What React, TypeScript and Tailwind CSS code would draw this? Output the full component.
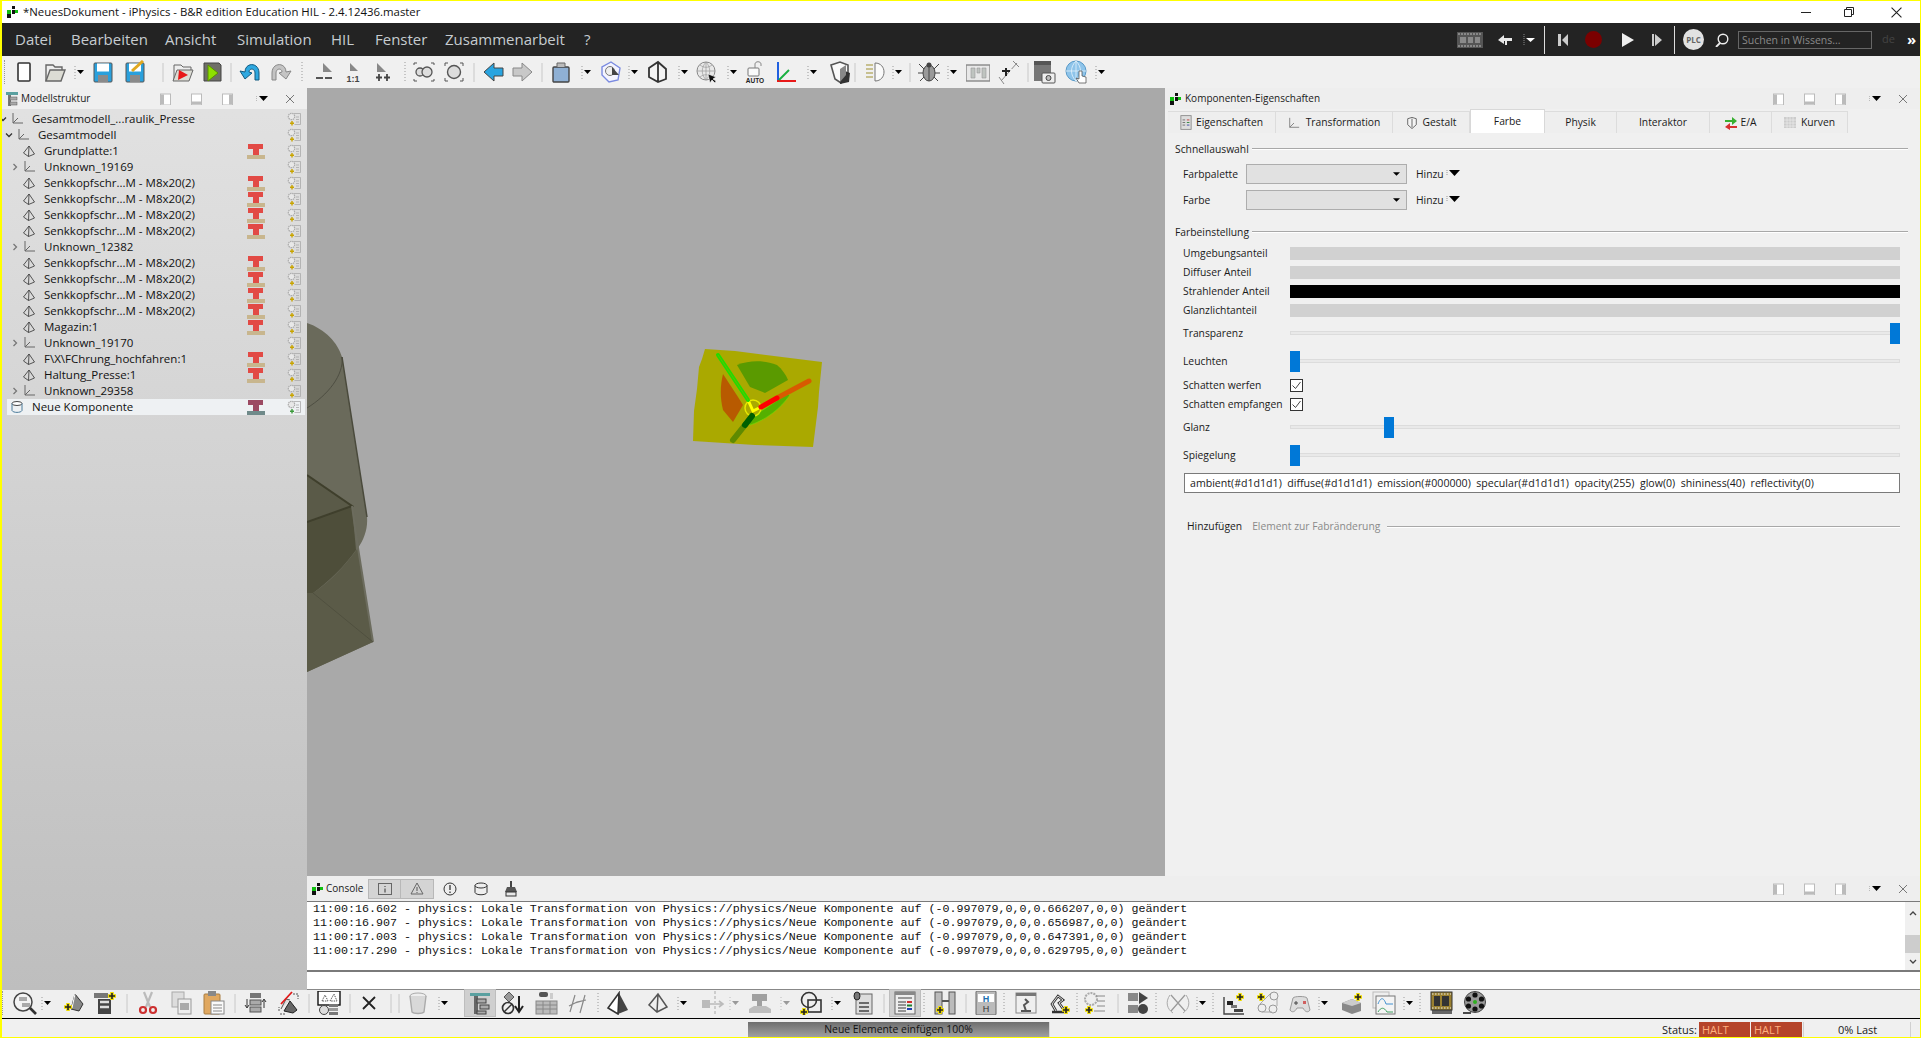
import React from "react";

const S = ({ children, className = "w-6 h-6" }: { children: React.ReactNode; className?: string }) => (
  <svg viewBox="0 0 24 24" className={className + " shrink-0"} fill="none">
    {children}
  </svg>
);

const plus = (x: number, y: number) => (
  <path d={`M${x - 4} ${y}h8M${x} ${y - 4}v8`} stroke="#f0dc00" strokeWidth="3.6" />
);
const plusDark = (x: number, y: number) => (
  <>
    {plus(x, y)}
    <path d={`M${x - 3} ${y}h6M${x} ${y - 3}v6`} stroke="#222" strokeWidth="1.6" />
  </>
);
const miniT = (
  <>
    <path d="M4 3h15v7h-5v6H9v-6H4z" fill="#a0a0a0" />
    <path d="M1 18l5-3h12l5 3v4H1z" fill="#bdbdbd" />
  </>
);
const pyramid = (fill = "none") => <path d="M12 3L3 14l8 7 10-5z M12 3l-1 18" fill={fill} stroke="#555" strokeWidth="1.5" />;

const icons: Record<string, React.ReactNode> = {
  sep: <path d="M12 3v19" stroke="#c8c8c8" />,
  handle: <path d="M12 2v21" stroke="#9a9a9a" strokeDasharray="1 2" />,
  arrow: (
    <>
      <path d="M7 6v13" stroke="#999" strokeDasharray="1 2" />
      <path d="M9 10h7l-3.500 4z" fill="#000" />
    </>
  ),
  arrowG: (
    <>
      <path d="M7 6v13" stroke="#bbb" strokeDasharray="1 2" />
      <path d="M9 10h7l-3.500 4z" fill="#999" />
    </>
  ),
  new: <rect x="6" y="3" width="12" height="18" rx="1" fill="#fff" stroke="#333" strokeWidth="1.6" />,
  open: (
    <>
      <path d="M3 21V5h7l2 2h7v3" fill="#eee" stroke="#666" strokeWidth="1.4" />
      <path d="M3 21l4-11h15l-4 11z" fill="#dcdcd4" stroke="#666" strokeWidth="1.4" />
    </>
  ),
  save: (
    <>
      <rect x="3" y="3" width="18" height="19" rx="1" fill="#2aa0dc" stroke="#555" />
      <rect x="6" y="3.500" width="12" height="8" fill="#fff" />
      <rect x="7" y="15" width="10" height="7" fill="#8a8a8a" />
    </>
  ),
  saveas: (
    <>
      <rect x="3" y="3" width="18" height="19" rx="1" fill="#2aa0dc" stroke="#555" />
      <rect x="6" y="3.500" width="12" height="8" fill="#fff" />
      <rect x="7" y="15" width="10" height="7" fill="#8a8a8a" />
      <path d="M9 11L20 1" stroke="#e0a820" strokeWidth="3" />
    </>
  ),
  openRed: (
    <>
      <path d="M3 20V5h7l2 2h8v3" fill="#eee" stroke="#666" />
      <path d="M2 21l4-11h16l-4 11z" fill="#dcdcd4" stroke="#666" />
      <path d="M8 10l9 5-10 5z" fill="#e81818" />
    </>
  ),
  playGreen: (
    <>
      <path d="M4 3h15l2 2v16H4z" fill="#6f6f68" stroke="#444" />
      <path d="M8 5l10 8-10 8z" fill="#8ee000" stroke="#5a9000" />
    </>
  ),
  undo: <path d="M7 12c0-10 14-10 14 1v7h-4v-7c0-5-6-5-6-1l3 1-7 6-5-8z" fill="#2ea8e0" stroke="#135a80" />,
  redo: <path d="M17 12c0-10-14-10-14 1v7h4v-7c0-5 6-5 6-1l-3 1 7 6 5-8z" fill="#c4c4c4" stroke="#888" />,
  slow: (
    <>
      <path d="M11 3l9 9H11z" fill="#888" />
      <path d="M4 18h7M13 18h7" stroke="#555" strokeWidth="2.2" />
    </>
  ),
  one: (
    <>
      <path d="M9 3l8 8H9z" fill="#888" />
      <text x="12" y="22" textAnchor="middle" fontSize="9" fontWeight="700" fontFamily="Liberation Sans" fill="#444">
        1:1
      </text>
    </>
  ),
  fast: (
    <>
      <path d="M6 3l9 9H6z" fill="#888" />
      <path d="M8 14v7M5 17.500h6M16 14v7M13 17.500h6" stroke="#444" strokeWidth="1.8" />
    </>
  ),
  fit1: (
    <>
      <circle cx="8" cy="12" r="4" fill="#ddd" stroke="#555" strokeWidth="1.3" />
      <circle cx="15" cy="12" r="5" fill="#ddd" stroke="#555" strokeWidth="1.3" />
      <path d="M2 5V3h3M19 3h3v2M2 19v2h3M19 21h3v-2" stroke="#555" />
    </>
  ),
  fit2: (
    <>
      <circle cx="12" cy="12" r="6.500" fill="#ddd" stroke="#555" strokeWidth="1.4" />
      <path d="M3 6V3h3M18 3h3v3M3 18v3h3M18 21h3v-3" stroke="#555" />
    </>
  ),
  left: <path d="M2 12l10-9v5h9v8h-9v5z" fill="#28a4e0" stroke="#444" />,
  right: <path d="M22 12L12 3v5H3v8h9v5z" fill="#c8c8c8" stroke="#888" />,
  box: (
    <>
      <rect x="4" y="7" width="16" height="15" rx="1" fill="#8fb0d4" stroke="#444" strokeWidth="1.4" />
      <path d="M8 7V3h8v4" fill="#bbb" stroke="#666" />
    </>
  ),
  hex: (
    <>
      <path d="M12 2l9 6-2 12-9 2-7-7V7z" fill="#f4f4ff" stroke="#7a8ae0" strokeWidth="1.4" />
      <circle cx="11" cy="11" r="4.500" fill="#eee" stroke="#777" />
      <path d="M13 7l7 8h-7z" fill="#444" />
    </>
  ),
  cube: <path d="M3 8l9-6 8 7v10l-8 3-9-5zM12 2v20" stroke="#333" strokeWidth="1.8" fill="#f3f3f3" />,
  globe: (
    <>
      <circle cx="11" cy="11" r="9" fill="#e8e8e8" stroke="#888" />
      <path d="M2 11h18M11 2v18M5 5c4 3 8 3 12 0M5 17c4-3 8-3 12 0M11 2c-5 6-5 12 0 18M11 2c5 6 5 12 0 18" stroke="#999" strokeWidth=".7" />
      <path d="M13 14l2 9 2-3 3 3 1-2-3-2 3-2z" fill="#111" stroke="#fff" strokeWidth=".6" />
    </>
  ),
  auto: (
    <>
      <rect x="4" y="8" width="11" height="8" rx="1" fill="#fafafa" stroke="#777" />
      <path d="M11 8V4c0-3 6-3 6 0v2" stroke="#888" />
      <text x="11" y="23" textAnchor="middle" fontSize="6.500" fontWeight="700" fontFamily="Liberation Sans" fill="#222">
        AUTO
      </text>
    </>
  ),
  axes: (
    <>
      <path d="M4 2v19" stroke="#2060e0" strokeWidth="2" />
      <path d="M3 21h19" stroke="#e81818" strokeWidth="2" />
      <path d="M5 20L15 10" stroke="#18b040" strokeWidth="2" />
    </>
  ),
  shield: (
    <>
      <path d="M3 5l9-3 8 3v12l-7 6-6-4z" fill="#fafafa" stroke="#555" strokeWidth="1.6" />
      <path d="M12 9l10 4-1 9-9 2z" fill="#333" />
      <path d="M12 9l6-4v10l-6 7z" fill="#888" />
    </>
  ),
  lamp: (
    <>
      <path d="M12 3c12 0 12 18 0 18z" fill="#fafafa" stroke="#777" />
      <path d="M3 5h7M3 9h7M3 13h7M3 17h7" stroke="#b9b070" strokeWidth="1.6" />
    </>
  ),
  bug: (
    <>
      <ellipse cx="12" cy="13" rx="6" ry="8" fill="#999" stroke="#444" />
      <path d="M12 5v16M2 4l5 5M22 4l-5 5M1 13h5M23 13h-5M3 21l4-4M21 21l-4-4" stroke="#444" />
      <circle cx="12" cy="5" r="2.500" fill="#444" />
    </>
  ),
  panelG: (
    <>
      <rect x="0" y="5" width="24" height="16" fill="#e8e8e8" stroke="#888" strokeWidth="1.4" />
      <path d="M5 8h4v10H5zM11 8h3v5h-3zM16 8h4v10h-4z" fill="#bfc4c0" stroke="#999" strokeWidth=".6" />
    </>
  ),
  measure: (
    <>
      <path d="M4 21L20 3" stroke="#888" strokeDasharray="14 2" />
      <path d="M2 17l5 7M16 1l6 6" stroke="#888" />
      <path d="M9 8v8M5 11h8" stroke="#222" strokeWidth="2" />
    </>
  ),
  cam: (
    <>
      <rect x="2" y="1" width="17" height="20" fill="#777" />
      <rect x="2" y="1" width="17" height="4" fill="#555" />
      <rect x="10" y="13" width="13" height="10" rx="1" fill="#eee" stroke="#555" />
      <circle cx="16.500" cy="18" r="2.500" fill="#bbb" stroke="#444" />
    </>
  ),
  globeHand: (
    <>
      <circle cx="11" cy="11" r="10" fill="#8ec4ea" stroke="#5a9ac8" />
      <path d="M1 11h20M11 1v20M11 1c-6 6-6 14 0 20M11 1c6 6 6 14 0 20" stroke="#e4f2fb" strokeWidth=".8" />
      <path d="M14 11h3v5l4 1v6h-7l-3-5 3 1z" fill="#fff" stroke="#444" strokeWidth=".7" />
    </>
  ),
  ztree: (
    <>
      <circle cx="10" cy="11" r="9" fill="#f4f4f4" stroke="#444" strokeWidth="1.5" />
      <path d="M17 17l6 6" stroke="#333" strokeWidth="2.6" />
      <rect x="6" y="6" width="8" height="4" fill="#aaa" />
      <rect x="9" y="12" width="8" height="4" fill="#aaa" />
    </>
  ),
  addShape: (
    <>
      <path d="M14 3l8 10-4 7-8-2z" fill="#888" stroke="#333" />
      <path d="M14 3l-3 14" stroke="#fff" />
      {plusDark(7, 16)}
    </>
  ),
  stackAdd: (
    <>
      <rect x="1" y="2" width="14" height="5" fill="#777" />
      <rect x="5" y="8" width="13" height="15" fill="#444" />
      <path d="M7 11h9M7 16h9" stroke="#ddd" strokeWidth="2.6" />
      {plusDark(19, 5)}
    </>
  ),
  scissors: (
    <>
      <path d="M8 1l6 15M16 1l-6 15" stroke="#bbb" strokeWidth="2.2" />
      <circle cx="7" cy="19" r="3" stroke="#cc3030" strokeWidth="2.2" />
      <circle cx="17" cy="19" r="3" stroke="#cc3030" strokeWidth="2.2" />
    </>
  ),
  copy: (
    <>
      <rect x="3" y="1" width="12" height="15" fill="#ddd" stroke="#aaa" />
      <rect x="9" y="8" width="13" height="15" fill="#eee" stroke="#999" />
      <path d="M11 12h9v7h-9z" fill="#aaa" />
    </>
  ),
  paste: (
    <>
      <rect x="2" y="3" width="16" height="20" rx="1" fill="#e0a860" stroke="#a87c40" />
      <rect x="6" y="0" width="8" height="5" fill="#888" />
      <rect x="9" y="10" width="13" height="13" fill="#fafafa" stroke="#888" />
      <path d="M11 14h9M11 17h9M11 20h9" stroke="#888" />
    </>
  ),
  treeArrows: (
    <>
      <rect x="7" y="2" width="11" height="5" fill="#777" />
      <rect x="7" y="9" width="11" height="5" fill="#aaa" stroke="#555" />
      <rect x="7" y="16" width="11" height="5" fill="#aaa" stroke="#555" />
      <path d="M4 8v8M2 14l2 3 2-3M21 17V9M19 11l2-3 2 3" stroke="#333" />
    </>
  ),
  swap: (
    <>
      <path d="M13 10l7 9-4 3-9-2z" fill="#666" stroke="#222" />
      <path d="M4 18L9 8l4 1" fill="#ddd" stroke="#555" />
      <path d="M4 13L15 1" stroke="#e01818" strokeWidth="1.8" />
      <path d="M16 3h5v5M2 20v-4M8 23H2" stroke="#555" strokeDasharray="2 1" />
    </>
  ),
  big: (
    <>
      <rect x="1" y="0" width="22" height="14" fill="#fff" stroke="#111" strokeWidth="1.4" />
      <path d="M5 10l3-6 3 6zM13 10l4-7 3 7z" stroke="#555" strokeDasharray="1.500 1" />
      <circle cx="7" cy="19" r="4.500" fill="#ddd" stroke="#444" />
      <rect x="12" y="13" width="9" height="3" fill="#777" />
      <rect x="12" y="17" width="9" height="3" fill="#999" />
      <rect x="12" y="21" width="9" height="3" fill="#777" />
    </>
  ),
  x: <path d="M6 6l12 12M18 6L6 18" stroke="#222" strokeWidth="1.8" />,
  trash: (
    <>
      <ellipse cx="12" cy="5" rx="8" ry="3" fill="#eee" stroke="#aaa" />
      <path d="M4 5l2 16c2 2 10 2 12 0l2-16" fill="#d8d8d8" stroke="#aaa" strokeWidth="1.4" />
    </>
  ),
  treeActive: (
    <>
      <rect x="2" y="2" width="20" height="3" fill="#5aa0a0" />
      <rect x="6" y="5" width="4" height="18" fill="#666" />
      <rect x="9" y="8" width="9" height="4" fill="#aaa" stroke="#444" />
      <rect x="12" y="14" width="9" height="4" fill="#aaa" stroke="#444" />
      <rect x="9" y="20" width="9" height="3" fill="#aaa" stroke="#444" />
    </>
  ),
  noShape: (
    <>
      <path d="M9 1l5 5-5 5-5-5z" fill="#999" stroke="#555" />
      <circle cx="8" cy="17" r="5.500" stroke="#333" strokeWidth="1.7" />
      <path d="M4 21l8-8" stroke="#333" strokeWidth="1.5" />
      <path d="M19 5v15M15 15l4 6 4-6" stroke="#222" strokeWidth="2" />
    </>
  ),
  table: (
    <>
      <rect x="2" y="10" width="21" height="13" fill="#bbb" stroke="#888" />
      <path d="M2 14h21M2 18h21M9 10v13M16 10v13" stroke="#888" />
      <rect x="5" y="1" width="9" height="5" rx="2" fill="#555" />
      <rect x="16" y="2" width="3" height="6" fill="#ccc" />
    </>
  ),
  lines: <path d="M4 21L9 4M9 12l7-2M14 22l5-18M3 15l8-4 9-2" stroke="#888" strokeWidth="1.2" />,
  pyrF: (
    <>
      <path d="M13 2l9 17-10 4z" fill="#444" />
      <path d="M13 2L2 17l10 6z" fill="#fff" stroke="#333" strokeWidth="1.6" />
    </>
  ),
  pyr: pyramid(),
  move: (
    <>
      <rect x="1" y="9" width="8" height="8" fill="#bbb" />
      <path d="M9 13h12M18 10l4 3-4 3" stroke="#bbb" strokeWidth="1.6" />
      <path d="M14 0v24" stroke="#ccc" strokeWidth="2" strokeDasharray="3 2" />
    </>
  ),
  tGray: miniT,
  circSq: (
    <>
      <circle cx="10" cy="9" r="7.500" stroke="#333" strokeWidth="1.6" />
      <rect x="9" y="9" width="13" height="12" stroke="#333" strokeWidth="1.6" />
      {plusDark(5, 21)}
    </>
  ),
  bugDoc: (
    <>
      <rect x="6" y="3" width="16" height="20" fill="#ddd" stroke="#666" />
      <path d="M9 12h10M9 16h10M9 20h10" stroke="#444" strokeWidth="1.4" />
      <ellipse cx="7" cy="5" rx="3" ry="4" fill="#777" stroke="#222" />
    </>
  ),
  listActive: (
    <>
      <rect x="2" y="1" width="20" height="22" fill="#eee" stroke="#666" />
      <rect x="2" y="1" width="20" height="3" fill="#888" />
      <path d="M5 7h14" stroke="#444" />
      <path d="M5 11h8M5 14h8M5 17h8M5 20h8" stroke="#777" strokeWidth="1.5" />
      <path d="M14 11h5" stroke="#d03030" strokeWidth="2" />
      <path d="M14 14.500h5" stroke="#208030" strokeWidth="2" />
      <path d="M14 18h5" stroke="#2040b0" strokeWidth="2" />
    </>
  ),
  hPlus: (
    <>
      <rect x="3" y="1" width="7" height="22" fill="#bbb" stroke="#555" />
      <rect x="17" y="1" width="6" height="22" fill="#bbb" stroke="#555" />
      <path d="M10 10h7" stroke="#555" strokeWidth="2" />
      {plusDark(8, 19)}
    </>
  ),
  hh: (
    <>
      <rect x="2" y="0" width="20" height="24" rx="1" fill="#bbb" stroke="#666" />
      <rect x="4" y="3" width="16" height="8" fill="#fff" />
      <text x="12" y="10.500" textAnchor="middle" fontSize="9" fontWeight="700" fontFamily="Liberation Sans" fill="#2070b0">
        H
      </text>
      <text x="12" y="21" textAnchor="middle" fontSize="9" fontFamily="Liberation Sans" fill="#333">
        H
      </text>
    </>
  ),
  robotPanel: (
    <>
      <rect x="2" y="2" width="20" height="20" fill="#efefef" stroke="#888" />
      <rect x="2" y="2" width="20" height="3" fill="#777" />
      <path d="M7 20h10M12 20l-2-6 4-3-3-3" stroke="#555" strokeWidth="2" />
    </>
  ),
  robot: (
    <>
      <path d="M5 21h12M9 20l-4-7 6-8 5 4-4 3 5 7" stroke="#333" strokeWidth="2.6" />
      <path d="M9 20l-4-7 6-8 5 4-4 3 5 7" stroke="#ddd" strokeWidth="1" />
      {plusDark(19, 19)}
    </>
  ),
  gearList: (
    <>
      <circle cx="8" cy="8" r="6" fill="#eee" stroke="#aaa" strokeDasharray="2 1" strokeWidth="2" />
      <path d="M13 5h9M14 10h8M14 15h8M11 20h11" stroke="#888" />
      {plusDark(6, 19)}
    </>
  ),
  playList: (
    <>
      <rect x="2" y="2" width="10" height="8" fill="#888" />
      <rect x="2" y="14" width="10" height="8" fill="#888" />
      <path d="M13 1l9 6-9 6z" fill="#444" />
      <circle cx="17" cy="18" r="5" fill="#444" />
    </>
  ),
  cross: (
    <>
      <path d="M4 4c-5 7-3 14 3 18M20 4c5 7 3 14-3 18" stroke="#aaa" />
      <path d="M5 4l14 16M19 4L5 20" stroke="#999" strokeWidth="1.2" />
    </>
  ),
  chartAdd: (
    <>
      <path d="M2 6v17h20" stroke="#444" strokeWidth="1.4" />
      <rect x="5" y="10" width="6" height="4" fill="#222" />
      <rect x="9" y="14" width="6" height="3" fill="#777" />
      <rect x="12" y="18" width="9" height="3" fill="#444" />
      {plusDark(18, 6)}
    </>
  ),
  gearsAdd: (
    <>
      <circle cx="19" cy="5" r="4" stroke="#999" />
      <circle cx="7" cy="17" r="4" stroke="#999" />
      <circle cx="18" cy="18" r="4" stroke="#999" />
      <path d="M16 2L5 13M22 7v8M7 21h10" stroke="#aaa" />
      {plusDark(6, 6)}
    </>
  ),
  pad: (
    <>
      <path d="M2 19l3-12c1-2 13-2 14 0l3 12c-2 3-5 2-7-2H9c-2 4-5 5-7 2z" fill="#ddd" stroke="#999" />
      <path d="M6 12h4M8 10v4" stroke="#444" />
      <rect x="15" y="10" width="3" height="3" fill="#d06060" />
    </>
  ),
  boxAdd: (
    <>
      <path d="M2 12l10-4 9 4v8l-9 3-10-4z" fill="#888" />
      <path d="M2 12l10-4 9 4-9 3z" fill="#ccc" />
      {plusDark(18, 6)}
    </>
  ),
  charts: (
    <>
      <rect x="1" y="1" width="16" height="16" fill="#eee" stroke="#bbb" />
      <rect x="4" y="5" width="19" height="18" fill="#f4f4f4" stroke="#777" />
      <path d="M6 13c3-8 6-6 8 0h7" stroke="#4090d0" />
      <path d="M6 21c3-5 6-5 9 0h6" stroke="#40a060" />
    </>
  ),
  film: (
    <>
      <rect x="2" y="4" width="20" height="19" fill="#666" />
      <rect x="1" y="1" width="21" height="18" fill="#9a8030" stroke="#333" />
      <rect x="4" y="5" width="6" height="10" fill="#333" />
      <rect x="12" y="5" width="7" height="10" fill="#333" />
      <path d="M2 3h19M2 17h19" stroke="#eee" strokeDasharray="1.500 1.500" />
    </>
  ),
  reel: (
    <>
      <circle cx="13" cy="11" r="10.500" fill="#999" stroke="#444" />
      <circle cx="13" cy="4" r="2.600" fill="#111" />
      <circle cx="13" cy="18" r="2.600" fill="#111" />
      <circle cx="6.500" cy="8" r="2.600" fill="#111" />
      <circle cx="19.500" cy="8" r="2.600" fill="#111" />
      <circle cx="6.500" cy="15" r="2.600" fill="#111" />
      <circle cx="19.500" cy="15" r="2.600" fill="#111" />
      <circle cx="13" cy="11" r="2" fill="#30b020" />
      <path d="M1 22h8" stroke="#222" strokeWidth="1.6" />
    </>
  ),
};

const topTools: [string, string][] = [
  ["new", "w-[31px]"], ["open", "w-[25px]"], ["arrow", "w-[23px]"], ["save", "w-[32px]"], ["saveas", "w-[28px]"],
  ["sep", "w-[20px]"], ["openRed", "w-[29px]"], ["playGreen", "w-[19px]"], ["sep", "w-[19px]"], ["undo", "w-[31px]"],
  ["redo", "w-[21px]"], ["handle", "w-[22px]"], ["slow", "w-[29px]"], ["one", "w-[30px]"], ["fast", "w-[22px]"],
  ["handle", "w-[19px]"], ["fit1", "w-[30px]"], ["fit2", "w-[20px]"], ["sep", "w-[20px]"], ["left", "w-[28px]"],
  ["right", "w-[20px]"], ["sep", "w-[19px]"], ["box", "w-[26px]"], ["arrow", "w-[24px]"], ["hex", "w-[23px]"],
  ["arrow", "w-[24px]"], ["cube", "w-[26px]"], ["arrow", "w-[23px]"], ["globe", "w-[26px]"], ["arrow", "w-[23px]"],
  ["auto", "w-[30px]"], ["axes", "w-[27px]"], ["arrow", "w-[27px]"], ["shield", "w-[15px]"], ["sep", "w-[20px]"],
  ["lamp", "w-[23px]"], ["arrow", "w-[12px]"], ["sep", "w-[19px]"], ["bug", "w-[24px]"], ["arrow", "w-[25px]"],
  ["panelG", "w-[31px]"], ["measure", "w-[19px]"], ["sep", "w-[16px]"], ["cam", "w-[33px]"], ["globeHand", "w-[24px]"],
  ["arrow", "w-[24px]"],
];

const bottomTools: [string, string][] = [
  ["ztree", "w-[22px]"], ["arrow", "w-[26px]"], ["addShape", "w-[32px]"], ["stackAdd", "w-[22px]"], ["sep", "w-[21px]"],
  ["scissors", "w-[33px]"], ["copy", "w-[33px]"], ["paste", "w-[21px]"], ["sep", "w-[20px]"], ["treeArrows", "w-[34px]"],
  ["swap", "w-[20px]"], ["sep", "w-[20px]"], ["big", "w-[21px]"], ["sep", "w-[19px]"], ["x", "w-[22px]"],
  ["sep", "w-[8px]"], ["sep", "w-[19px]"], ["trash", "w-[26px]"], ["arrow", "w-[36px]"], ["treeActive*", "w-[32px]"],
  ["noShape", "w-[34px]"], ["table", "w-[32px]"], ["lines", "w-[20px]"], ["handle", "w-[20px]"], ["pyrF", "w-[40px]"],
  ["pyr", "w-[25px]"], ["arrow", "w-[30px]"], ["move", "w-[22px]"], ["arrowG", "w-[25px]"], ["tGray", "w-[26px]"],
  ["arrowG", "w-[25px]"], ["circSq", "w-[26px]"], ["arrow", "w-[25px]"], ["bugDoc", "w-[22px]"], ["sep", "w-[21px]"],
  ["listActive*", "w-[19px]"], ["handle", "w-[20px]"], ["hPlus", "w-[22px]"], ["sep", "w-[20px]"], ["hh", "w-[18px]"],
  ["handle", "w-[22px]"], ["robotPanel", "w-[33px]"], ["robot", "w-[18px]"], ["handle", "w-[18px]"], ["gearList", "w-[23px]"],
  ["sep", "w-[20px]"], ["playList", "w-[18px]"], ["handle", "w-[22px]"], ["cross", "w-[24px]"], ["arrow", "w-[11px]"],
  ["handle", "w-[21px]"], ["chartAdd", "w-[33px]"], ["gearsAdd", "w-[33px]"], ["pad", "w-[24px]"], ["arrow", "w-[28px]"],
  ["boxAdd", "w-[32px]"], ["charts", "w-[25px]"], ["arrow", "w-[11px]"], ["handle", "w-[22px]"], ["film", "w-[32px]"],
  ["reel", "w-[24px]"],
];

const Tool = ({ name, w }: { name: string; w: string }) => {
  const active = name.endsWith("*");
  const key = active ? name.slice(0, -1) : name;
  return (
    <div className={w + " shrink-0 relative h-6"}>
      {active && <div className="absolute -left-1 -top-[2px] w-8 h-7 bg-[#cfcfcf] border border-[#bdbdbd]" />}
      <div className="absolute left-0 top-0">
        <S>{icons[key]}</S>
      </div>
    </div>
  );
};

const AppMark = () => (
  <svg viewBox="0 0 12 12" className="w-3 h-3 shrink-0">
    <rect x="5" y="0" width="3" height="3" fill="#111" />
    <rect x="0" y="4" width="4" height="4" fill="#10c010" />
    <rect x="5" y="4" width="3" height="4" fill="#111" />
    <rect x="8" y="4" width="3" height="3" fill="#10c010" />
    <rect x="0" y="8" width="4" height="4" fill="#111" />
  </svg>
);

const DockButtons = () => (
  <div className="ml-auto flex items-center pr-[11px]">
    <svg viewBox="0 0 12 12" className="w-[31px] h-3 shrink-0" preserveAspectRatio="xMinYMid meet">
      <rect x=".5" y="1" width="10" height="11" fill="#fff" stroke="#bbb" />
      <rect x="1" y="1.500" width="3" height="10" fill="#bbb" />
    </svg>
    <svg viewBox="0 0 12 12" className="w-[31px] h-3 shrink-0" preserveAspectRatio="xMinYMid meet">
      <rect x=".5" y="1" width="10" height="11" fill="#fff" stroke="#bbb" />
      <rect x="1" y="8.500" width="9" height="3" fill="#bbb" />
    </svg>
    <svg viewBox="0 0 12 12" className="w-[34px] h-3 shrink-0" preserveAspectRatio="xMinYMid meet">
      <rect x=".5" y="1" width="10" height="11" fill="#fff" stroke="#bbb" />
      <rect x="7" y="1.500" width="3" height="10" fill="#bbb" />
    </svg>
    <svg viewBox="0 0 14 12" className="w-[28px] h-3 shrink-0" preserveAspectRatio="xMinYMid meet">
      <path d="M0 3v6" stroke="#888" strokeDasharray="1 1" />
      <path d="M3 3h9l-4.500 5z" fill="#000" />
    </svg>
    <svg viewBox="0 0 12 12" className="w-3 h-3 shrink-0">
      <path d="M2 2l8 8M10 2l-8 8" stroke="#777" />
    </svg>
  </div>
);

const ROWS: [number, string, string, boolean, boolean][] = [
  [0, "open", "Gesamtmodell_...raulik_Presse", false, true],
  [1, "open", "Gesamtmodell", false, true],
  [2, "", "Grundplatte:1", true, false],
  [2, "closed", "Unknown_19169", false, true],
  [2, "", "Senkkopfschr...M - M8x20(2)", true, false],
  [2, "", "Senkkopfschr...M - M8x20(2)", true, false],
  [2, "", "Senkkopfschr...M - M8x20(2)", true, false],
  [2, "", "Senkkopfschr...M - M8x20(2)", true, false],
  [2, "closed", "Unknown_12382", false, true],
  [2, "", "Senkkopfschr...M - M8x20(2)", true, false],
  [2, "", "Senkkopfschr...M - M8x20(2)", true, false],
  [2, "", "Senkkopfschr...M - M8x20(2)", true, false],
  [2, "", "Senkkopfschr...M - M8x20(2)", true, false],
  [2, "", "Magazin:1", true, false],
  [2, "closed", "Unknown_19170", false, true],
  [2, "", "F\\X\\FChrung_hochfahren:1", true, false],
  [2, "", "Haltung_Presse:1", true, false],
  [2, "closed", "Unknown_29358", false, true],
];

const TreeT = ({ selected = false }: { selected?: boolean }) => (
  <svg viewBox="0 0 18 15" className="w-[18px] h-[15px]">
    <path d="M0 11h18v4H0z" fill={selected ? "#6f8a8a" : "#c8b68e"} />
    <path d="M1 0h15v5h-4v6H6V5H1z" fill={selected ? "#9c4a62" : "#e24a45"} />
  </svg>
);

const TreeGear = ({ selected = false }: { selected?: boolean }) => (
  <svg viewBox="0 0 14 14" className="w-[14px] h-[14px]" fill="none">
    <path d="M7 1.500h6.500v11H7.500M9 5h3M9 7.500h3M9 10h3" stroke="#aaa" strokeWidth=".8" />
    <circle cx="4.500" cy="4.500" r="3.200" fill="#e8e8e8" stroke="#aaa" strokeDasharray="1.500 .7" strokeWidth="1.200" />
    <path d="M5 9v4.500M3 11.300h4" stroke={selected ? "#3c9a3c" : "#c8a400"} strokeWidth="1.400" />
  </svg>
);

const TreeRow = ({ level, chev, label, shape, ax }: { level: number; chev: string; label: string; shape: boolean; ax: boolean }) => (
  <div className={"flex items-center h-4 pr-1 " + (level === 0 ? "pl-0" : level === 1 ? "pl-[6px]" : "pl-[12px]")}>
    <div className="w-2 shrink-0">
      {chev && (
        <svg viewBox="0 0 8 8" className="w-2 h-2 -ml-[3px]">
          {chev === "open" ? (
            <path d="M1 2.500l3 3 3-3" stroke="#333" strokeWidth="1.300" fill="none" />
          ) : (
            <path d="M2.500 1l3 3-3 3" stroke="#777" strokeWidth="1.300" fill="none" />
          )}
        </svg>
      )}
    </div>
    <div className="w-[14px] shrink-0 flex justify-center">
      <svg viewBox="0 0 14 14" className="w-[14px] h-[14px]">
        {ax && <path d="M3 1v10h10M3 11l5-5" stroke="#666" strokeWidth="1" fill="none" />}
        {shape && <path d="M7 2L1.500 9l5 3.500 6-2.500zM7 2l-.500 10.500" stroke="#444" strokeWidth=".9" fill="none" />}
      </svg>
    </div>
    <div className="flex-1 pl-2 whitespace-nowrap">{label}</div>
    <div className="w-5 mr-[19px] flex justify-center">{shape && <TreeT />}</div>
    <div className="w-[18px] flex justify-center">
      <TreeGear />
    </div>
  </div>
);

const LeftPanel = () => (
  <div className="w-[305px] shrink-0 flex flex-col bg-gradient-to-b from-[#e2e2e2] to-[#bebebe]">
    <div className="h-[21px] bg-[#efefef] flex items-center pl-[3px] text-[10px]">
      <svg viewBox="0 0 14 14" className="w-[14px] h-[14px] shrink-0">
        <rect x="1" y="0" width="12" height="3" fill="#5aa0a0" />
        <rect x="3" y="3" width="3" height="11" fill="#777" />
        <rect x="5" y="5" width="7" height="3" fill="#aaa" stroke="#555" strokeWidth=".5" />
        <rect x="5" y="10" width="7" height="3" fill="#aaa" stroke="#555" strokeWidth=".5" />
      </svg>
      <span className="pl-[2px]">Modellstruktur</span>
      <DockButtons />
    </div>
    <div className="pt-[2px] text-[11.5px] text-[#111]">
      {ROWS.map((r, i) => (
        <TreeRow key={i} level={r[0]} chev={r[1]} label={r[2]} shape={r[3]} ax={r[4]} />
      ))}
      <div className="flex items-center h-4 ml-[5px] mr-[2px] pr-[2px] bg-[#eef1f3]">
        <div className="w-[3px] shrink-0" />
        <svg viewBox="0 0 14 14" className="w-[14px] h-[14px] shrink-0">
          <ellipse cx="7" cy="3.500" rx="5" ry="2" stroke="#444" fill="#fff" />
          <path d="M2 3.500v7c1 2.500 9 2.500 10 0v-7" stroke="#4a7a9a" fill="none" />
        </svg>
        <div className="flex-1 pl-2 whitespace-nowrap">Neue Komponente</div>
        <div className="w-5 mr-[19px] flex justify-center">
          <TreeT selected />
        </div>
        <div className="w-[18px] flex justify-center">
          <TreeGear selected />
        </div>
      </div>
    </div>
  </div>
);

const Viewport = () => (
  <div className="flex-1 min-w-0 bg-[#a9a9a9]">
    <svg viewBox="307 88 858 788" className="block w-full h-full">
      {/* grosses Werkstueck links */}
      <path d="M307 323c18 6 31 20 35 34l25 160c1 12-3 22-9 31l15 94-66 30z" fill="#6a6a5b" />
      <path d="M307 522l45-16 4 44c-12 17-28 32-43 43h-6z" fill="#4e4e3a" />
      <path d="M307 475l45 31-45 16z" fill="#5a5a48" />
      <path d="M358 548l15 94-66 30v-79h6c17-11 31-26 45-45z" fill="#5b5b48" />
      <path d="M342 357c2 18-14 38-35 51" stroke="#4e4e42" strokeWidth="1" fill="none" />
      <path d="M342 357l25 160" stroke="#4a4a3c" strokeWidth="1.500" fill="none" />
      <path d="M307 475l45 31-45 16" stroke="#3f3f2c" strokeWidth="2" fill="none" />
      <path d="M352 506l6 42 15 94" stroke="#6c6c5e" strokeWidth="2" fill="none" />
      <path d="M313 593l60 49" stroke="#4d4d3c" strokeWidth=".8" fill="none" />
      {/* Koordinatensystem */}
      <path d="M705 349l30 2 87 11-3 30-1 15-5 40-58-2-62-4 1-30 3-22 2-22 3-8z" fill="#aaa900" />
      <path d="M737 365c13-5 27-5 40 0 5 4 9 10 11 15l-23 13-15-6z" fill="#5a9a00" />
      <path d="M723 374l15 23 5 8-10 17-10-12c-3-12-3-24 0-36z" fill="#b85a00" />
      <path d="M750 425c16-5 30-16 40-30l-3-1-30 20-9 8z" fill="#55b000" stroke="#70e000" strokeWidth=".6" />
      <circle cx="753" cy="408" r="8" fill="none" stroke="#e8e800" strokeWidth="1.500" />
      <path d="M748 400l5 11 6-3" stroke="#ffff00" strokeWidth="3" fill="none" />
      <path d="M718 355l30 45" stroke="#20dc00" strokeWidth="4" strokeLinecap="round" />
      <path d="M718 355l30 45" stroke="#60c000" strokeWidth="1" />
      <path d="M809 381l-32 17" stroke="#d85a00" strokeWidth="5" strokeLinecap="round" />
      <path d="M777 398l-16 9" stroke="#ff0000" strokeWidth="5" strokeLinecap="round" />
      <path d="M733 440l12-15" stroke="#5f8a00" strokeWidth="6" strokeLinecap="round" />
      <path d="M745 425l7-9" stroke="#006000" strokeWidth="6" strokeLinecap="round" />
    </svg>
  </div>
);

const TABS: [string, string, boolean?][] = [
  ["Eigenschaften", "w-[108px]"],
  ["Transformation", "w-[117px]"],
  ["Gestalt", "w-[77px]"],
  ["Farbe", "w-[75px]", true],
  ["Physik", "w-[72px]"],
  ["Interaktor", "w-[93px]"],
  ["E/A", "w-[62px]"],
  ["Kurven", "w-[76px]"],
];

const TabIcon = ({ name }: { name: string }) => {
  if (name === "Eigenschaften")
    return (
      <svg viewBox="0 0 14 16" className="w-3 h-[15px] mr-1">
        <rect x="1" y="0" width="12" height="16" fill="#ddd" stroke="#888" />
        <path d="M3 5h3M3 8h3M3 11h3" stroke="#666" />
        <path d="M8 5h3" stroke="#c03030" />
        <path d="M8 8h3" stroke="#208030" />
        <path d="M8 11h3" stroke="#3040a0" />
      </svg>
    );
  if (name === "Transformation")
    return (
      <svg viewBox="0 0 14 14" className="w-3 h-3 mr-[6px]">
        <path d="M2 1v11h11M2 12l5-5" stroke="#777" fill="none" />
      </svg>
    );
  if (name === "Gestalt")
    return (
      <svg viewBox="0 0 14 14" className="w-3 h-[14px] mr-[5px]">
        <path d="M2 2l5-1.500L12 2v7l-5 4.500L2 9z" stroke="#555" fill="#f4f4f4" />
        <path d="M7 2v10" stroke="#555" />
      </svg>
    );
  if (name === "E/A")
    return (
      <svg viewBox="0 0 14 14" className="w-[14px] h-[14px] mr-[2px]">
        <path d="M1 4h7V1l5 4-5 4V6H1z" fill="#38b030" />
        <path d="M13 10H6V7l-5 4 5 3v-2h7z" fill="#d83030" />
      </svg>
    );
  if (name === "Kurven")
    return (
      <svg viewBox="0 0 12 12" className="w-3 h-3 mr-[5px]">
        <rect width="12" height="11" fill="#ccc" />
        <path d="M0 3h12M0 6h12M0 9h12M3 0v11M6 0v11M9 0v11" stroke="#f0f0f0" strokeWidth=".6" />
      </svg>
    );
  return null;
};

const GroupLine = ({ label }: { label: string }) => (
  <div className="flex items-center h-4 -mr-2">
    <span className="pr-[3px] pt-px">{label}</span>
    <div className="flex-1 h-[2px] bg-[#a8a8a8] border-b border-white" />
  </div>
);

const Combo = ({ label, className }: { label: string; className: string }) => (
  <div className={"flex items-center pl-2 h-5 " + className}>
    <span className="w-[63px] shrink-0 pt-px">{label}</span>
    <div className="w-[161px] h-5 bg-[#e1e1e1] border border-[#adadad] flex items-center justify-end pr-[6px]">
      <svg viewBox="0 0 8 4" className="w-[7px] h-1">
        <path d="M0 0h8L4 4z" fill="#000" />
      </svg>
    </div>
    <span className="pl-[9px] pt-px">Hinzu</span>
    <svg viewBox="0 0 14 6" className="w-[14px] h-[6px] ml-[2px] -mt-[3px]">
      <path d="M1 0v5" stroke="#999" strokeDasharray="1 1" />
      <path d="M3 0h11L8.500 6z" fill="#000" />
    </svg>
  </div>
);

const ColorRow = ({ label, color, mt }: { label: string; color: string; mt: string }) => (
  <div className={"flex items-center pl-2 h-[13px] " + mt}>
    <span className="w-[107px] shrink-0 pt-px">{label}</span>
    <div className={"flex-1 h-[13px] " + color} />
  </div>
);

const SliderRow = ({ label, handle, mt }: { label: string; handle: string; mt: string }) => (
  <div className={"flex items-center pl-2 h-[21px] " + mt}>
    <span className="w-[107px] shrink-0 pt-px">{label}</span>
    <div className="flex-1 relative h-[21px]">
      <div className="absolute inset-x-0 top-2 h-1 bg-[#e9e9e9] border border-[#dcdcdc]" />
      <div className={"absolute top-0 w-[10px] h-[21px] bg-[#0078d7] " + handle} />
    </div>
  </div>
);

const CheckRow = ({ label, mt }: { label: string; mt: string }) => (
  <div className={"flex items-center pl-2 h-[13px] " + mt}>
    <span className="w-[107px] shrink-0 whitespace-nowrap">{label}</span>
    <div className="w-[13px] h-[13px] bg-white border border-[#333] flex items-center justify-center">
      <svg viewBox="0 0 11 11" className="w-[11px] h-[11px]">
        <path d="M1.500 5.500l3 3 5-6.500" stroke="#444" fill="none" />
      </svg>
    </div>
  </div>
);

const RightPanel = () => (
  <div className="w-[755px] shrink-0 bg-[#f0f0f0] flex flex-col">
    <div className="h-[21px] flex items-center pl-[5px] bg-[#eeeeee] text-[10px]">
      <AppMark />
      <span className="pl-[3px] whitespace-nowrap">Komponenten-Eigenschaften</span>
      <DockButtons />
    </div>
    <div className="h-6 flex items-end pl-[3px]">
      {TABS.map(([name, w, active]) =>
        active ? (
          <div key={name} className={w + " h-6 bg-white border-t border-x border-[#d8d8d8] flex items-center justify-center shrink-0"}>
            {name}
          </div>
        ) : (
          <div key={name} className={w + " h-[22px] bg-[#eeeeee] border-t border-r border-[#dcdcdc] flex items-center justify-center shrink-0"}>
            <TabIcon name={name} />
            {name}
          </div>
        ),
      )}
    </div>
    <div className="pl-[10px] pr-5 pt-2">
      <GroupLine label="Schnellauswahl" />
      <Combo label="Farbpalette" className="mt-[7px]" />
      <Combo label="Farbe" className="mt-[6px]" />
      <div className="mt-[14px]">
        <GroupLine label="Farbeinstellung" />
      </div>
      <ColorRow label="Umgebungsanteil" color="bg-[#d1d1d1]" mt="mt-[7px]" />
      <ColorRow label="Diffuser Anteil" color="bg-[#d1d1d1]" mt="mt-[6px]" />
      <ColorRow label="Strahlender Anteil" color="bg-black" mt="mt-[6px]" />
      <ColorRow label="Glanzlichtanteil" color="bg-[#d1d1d1]" mt="mt-[6px]" />
      <SliderRow label="Transparenz" handle="right-0" mt="mt-[6px]" />
      <SliderRow label="Leuchten" handle="left-0" mt="mt-[7px]" />
      <CheckRow label="Schatten werfen" mt="mt-[7px]" />
      <CheckRow label="Schatten empfangen" mt="mt-[6px]" />
      <SliderRow label="Glanz" handle="left-[94px]" mt="mt-[6px]" />
      <SliderRow label="Spiegelung" handle="left-0" mt="mt-[7px]" />
      <div className="mt-[7px] ml-[9px] h-5 bg-white border border-[#7a7a7a] flex items-center pl-[5px] pt-px whitespace-pre text-[10.6px]">
        ambient(#d1d1d1)  diffuse(#d1d1d1)  emission(#000000)  specular(#d1d1d1)  opacity(255)  glow(0)  shininess(40)  reflectivity(0)
      </div>
      <div className="mt-[26px] h-4 flex items-center pl-3">
        <span>Hinzufügen</span>
        <span className="pl-[10px] text-[#8a8a8a]">Element zur Fabränderung</span>
        <div className="flex-1 ml-[7px] h-[2px] bg-[#a8a8a8] border-b border-white" />
      </div>
    </div>
  </div>
);

const LOG = [
  "11:00:16.602 - physics: Lokale Transformation von Physics://physics/Neue Komponente auf (-0.997079,0,0,0.666207,0,0) geändert",
  "11:00:16.907 - physics: Lokale Transformation von Physics://physics/Neue Komponente auf (-0.997079,0,0,0.656987,0,0) geändert",
  "11:00:17.003 - physics: Lokale Transformation von Physics://physics/Neue Komponente auf (-0.997079,0,0,0.647391,0,0) geändert",
  "11:00:17.290 - physics: Lokale Transformation von Physics://physics/Neue Komponente auf (-0.997079,0,0,0.629795,0,0) geändert",
];

const Console = () => (
  <div className="flex flex-col">
    <div className="h-[25px] bg-[#eeeeee] flex items-center pl-[5px] text-[10px]">
      <AppMark />
      <span className="pl-[2px] w-[42px]">Console</span>
      <div className="ml-[2px] flex h-5">
        <div className="w-[33px] bg-[#d4d4d4] border border-[#b8b8b8] flex items-center justify-center">
          <svg viewBox="0 0 14 12" className="w-[14px] h-3">
            <rect x=".5" y=".5" width="13" height="11" fill="none" stroke="#666" />
            <path d="M7 3v1M7 5.500v4" stroke="#333" />
          </svg>
        </div>
        <div className="w-[33px] bg-[#d4d4d4] border border-l-0 border-[#b8b8b8] flex items-center justify-center">
          <svg viewBox="0 0 14 13" className="w-[14px] h-[13px]">
            <path d="M7 1l6 11H1z" fill="none" stroke="#666" />
            <path d="M7 5v4M7 10v1" stroke="#555" />
          </svg>
        </div>
      </div>
      <div className="w-[31px] flex justify-center">
        <svg viewBox="0 0 14 14" className="w-[14px] h-[14px]">
          <circle cx="7" cy="7" r="6" fill="none" stroke="#333" />
          <path d="M7 3v5M7 9.500v1.500" stroke="#333" strokeWidth="1.300" />
        </svg>
      </div>
      <div className="w-[31px] flex justify-center">
        <svg viewBox="0 0 14 14" className="w-[14px] h-[14px]">
          <ellipse cx="7" cy="3.500" rx="6" ry="2.500" fill="none" stroke="#333" />
          <path d="M1 3.500v7c1 3 11 3 12 0v-7" fill="none" stroke="#333" />
        </svg>
      </div>
      <div className="w-[30px] flex justify-center">
        <svg viewBox="0 0 14 16" className="w-[14px] h-4">
          <path d="M6 0h2v6H6z" fill="#444" />
          <path d="M3 6h8l2 5H1z" fill="#555" />
          <rect x="2" y="11" width="10" height="4" fill="#e8e8e8" stroke="#333" />
        </svg>
      </div>
      <DockButtons />
    </div>
    <div className="h-[71px] bg-white border-t border-b-2 border-[#7a7a7a] flex">
      <div className="flex-1 pl-[6px] font-['Liberation_Mono',monospace] text-[11.67px] leading-[14px] text-[#111] whitespace-pre">
        {LOG.map((l) => (
          <div key={l}>{l}</div>
        ))}
      </div>
      <div className="w-[15px] bg-[#f0f0f0] flex flex-col items-center">
        <svg viewBox="0 0 8 6" className="w-2 h-[6px] mt-2">
          <path d="M1 5l3-3 3 3" stroke="#444" strokeWidth="1.300" fill="none" />
        </svg>
        <div className="w-[15px] h-[18px] mt-[19px] bg-[#cdcdcd]" />
        <svg viewBox="0 0 8 6" className="w-2 h-[6px] mt-[6px]">
          <path d="M1 1l3 3 3-3" stroke="#444" strokeWidth="1.300" fill="none" />
        </svg>
      </div>
    </div>
    <div className="h-[18px] bg-white border-b border-[#888]" />
  </div>
);

const App = () => {
  return (
    <div className="w-[1921px] h-[1038px] overflow-hidden flex flex-col bg-[#f0f0f0] border-y border-r border-l-2 border-[#ffff00] text-[10.3px] text-[#1a1a1a] font-['Open_Sans',sans-serif]">
      {/* Titelleiste */}
      <div className="h-[22px] shrink-0 bg-white flex items-center pl-[5px] text-[11.4px] text-[#111]">
        <AppMark />
        <span className="pl-[4px]">*NeuesDokument - iPhysics - B&amp;R edition Education HIL - 2.4.12436.master</span>
        <div className="ml-auto flex items-center pr-[18px]">
          <svg viewBox="0 0 10 10" className="w-[10px] h-[10px] mr-[33px]">
            <path d="M0 5.500h10" stroke="#222" />
          </svg>
          <svg viewBox="0 0 10 10" className="w-[10px] h-[10px] mr-[37px]">
            <path d="M.5 2.500h7v7h-7zM2.500 2.500V.5h7v7h-2" stroke="#222" fill="none" />
          </svg>
          <svg viewBox="0 0 10 10" className="w-[11px] h-[11px]">
            <path d="M.5.5l9 9M9.500.5l-9 9" stroke="#222" />
          </svg>
        </div>
      </div>

      {/* Menue */}
      <div className="h-[33px] shrink-0 bg-[#232323] flex items-center text-[15px] text-[#c6ccd0]">
        <span className="ml-[13px] w-[56px]">Datei</span>
        <span className="w-[94px]">Bearbeiten</span>
        <span className="w-[72px]">Ansicht</span>
        <span className="w-[94px]">Simulation</span>
        <span className="w-[44px]">HIL</span>
        <span className="w-[70px]">Fenster</span>
        <span className="w-[139px]">Zusammenarbeit</span>
        <span>?</span>
        <div className="ml-auto flex items-center">
          <svg viewBox="0 0 26 16" className="w-[26px] h-4 mr-[15px]">
            <rect width="26" height="16" fill="#555" />
            <path d="M1 2h24M1 14h24" stroke="#888" strokeWidth="2" strokeDasharray="2 1" />
            <path d="M3 5h6v6H3zM11 5h5v6h-5zM18 5h5v6h-5z" fill="#8a8a8a" />
          </svg>
          <svg viewBox="0 0 14 12" className="w-[14px] h-3 mr-[11px]">
            <path d="M0 6l6-5v3h8v3H9v4H7V7H6v3z" fill="#e8e8e8" />
          </svg>
          <svg viewBox="0 0 12 14" className="w-3 h-[14px] mr-[9px]">
            <path d="M1 1v12" stroke="#888" strokeDasharray="1 1" />
            <path d="M3 5h9l-4.500 4z" fill="#fff" />
          </svg>
          <div className="w-px h-7 bg-[#ddd] mr-[13px]" />
          <svg viewBox="0 0 10 12" className="w-[10px] h-3 mr-[17px]">
            <path d="M0 0h3v12H0zM10 0v12L4 6z" fill="#ccc" />
          </svg>
          <div className="w-[17px] h-[17px] rounded-full bg-[#7a0000] mr-5" />
          <svg viewBox="0 0 12 14" className="w-3 h-[14px] mr-[18px]">
            <path d="M0 0l12 7-12 7z" fill="#eee" />
          </svg>
          <svg viewBox="0 0 10 12" className="w-[10px] h-3 mr-3">
            <path d="M0 0h2v12H0zM3 0l7 6-7 6z" fill="#ccc" />
          </svg>
          <div className="w-px h-7 bg-[#ddd] mr-2" />
          <div className="w-[21px] h-[21px] rounded-full bg-[#e2e2e2] text-[#666] text-[8px] font-bold flex items-center justify-center mr-[11px]">
            PLC
          </div>
          <svg viewBox="0 0 14 14" className="w-[14px] h-[14px] mr-[9px]">
            <circle cx="8" cy="6" r="4.800" stroke="#eee" strokeWidth="1.400" fill="none" />
            <path d="M5 10l-4 4" stroke="#eee" strokeWidth="1.800" />
          </svg>
          <div className="w-[134px] h-[18px] border border-[#666] text-[10.5px] text-[#8a8a8a] pl-[3px] leading-[16px]">Suchen in Wissens...</div>
          <span className="w-[35px] pl-[10px] text-[11px] text-[#444]">de</span>
          <span className="w-[13px] text-white font-bold text-[15px] leading-none">»</span>
        </div>
      </div>

      {/* Werkzeugleiste */}
      <div className="h-[32px] shrink-0 flex items-center bg-[#f0f0f0]">
        <div className="w-[10px] shrink-0 pl-[2px]">
          <div className="w-px h-6 border-l border-dotted border-[#999]" />
        </div>
        {topTools.map(([name, w], i) => (
          <Tool key={i} name={name} w={w} />
        ))}
      </div>

      {/* Hauptbereich */}
      <div className="flex-1 min-h-0 flex">
        <LeftPanel />
        <div className="flex-1 min-w-0 flex flex-col">
          <div className="h-[788px] flex">
            <Viewport />
            <RightPanel />
          </div>
          <Console />
        </div>
      </div>

      {/* untere Werkzeugleiste */}
      <div className="h-[28px] shrink-0 flex items-start pt-px bg-[#efefef]">
        <div className="w-[11px] shrink-0">
          <div className="w-px h-6 border-l border-dotted border-[#999]" />
        </div>
        {bottomTools.map(([name, w], i) => (
          <Tool key={i} name={name} w={w} />
        ))}
      </div>
      <div className="h-px shrink-0 bg-black" />

      {/* Statusleiste */}
      <div className="h-[18px] shrink-0 flex items-end bg-[#f0f0f0] text-[11px]">
        <div className="ml-[746px] w-[301px] h-[15px] bg-gradient-to-b from-[#6e6e6e] to-[#a0a0a0] text-center text-[10.4px] leading-[15px] text-[#111]">
          Neue Elemente einfügen 100%
        </div>
        <div className="w-px h-[15px] bg-[#d8d8d8]" />
        <span className="ml-[612px] w-[37px] leading-[15px] whitespace-nowrap">Status:</span>
        <div className="w-[51px] h-[15px] bg-[#b5442a] text-[#ffb080] pl-[3px] leading-[15px]">HALT</div>
        <div className="ml-px w-[51px] h-[15px] bg-[#b5442a] text-[#ffb080] pl-[3px] leading-[15px]">HALT</div>
        <div className="w-px h-[15px] ml-px bg-[#d0d0d0]" />
        <span className="ml-[34px] w-[72px] leading-[15px]">0% Last</span>
        <div className="w-px h-[15px] bg-[#d0d0d0]" />
      </div>
    </div>
  );
};

export default App;
